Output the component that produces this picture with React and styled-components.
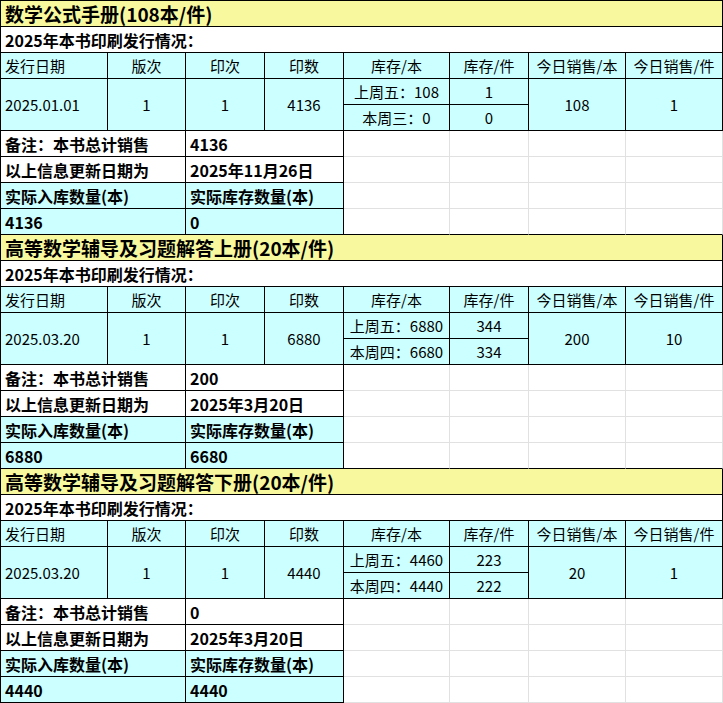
import styled, { createGlobalStyle } from 'styled-components';

const colors = {
  LINE: '#000000',
  GRID: '#e1e1e1',
  CYAN: '#ccffff',
  YELLOW: '#f8f99f',
  WHITE: '#ffffff',
};

const GlobalStyle = createGlobalStyle`
  html, body {
    margin: 0;
    padding: 0;
    background: #ffffff;
  }
  body {
    font-family: "Noto Sans CJK SC", "Noto Sans", sans-serif;
    color: #000;
  }
`;

const Sheet = styled.div`
  display: grid;
  grid-template-columns: 107px 78px 79px 79px 106px 79px 97px 97px;
  grid-auto-rows: 26px;
  width: fit-content;
  border-left: 1px solid ${colors.LINE};
  border-top: 1px solid ${colors.LINE};
`;

const Cell = styled.div`
  grid-column: span ${(p) => p.$cols || 1};
  grid-row: span ${(p) => p.$rows || 1};
  box-sizing: border-box;
  display: flex;
  align-items: center;
  justify-content: ${(p) => (p.$left ? 'flex-start' : 'center')};
  padding: ${(p) => (p.$left ? '0 0 0 4px' : '0')};
  background: ${(p) => p.$bg || colors.CYAN};
  border-right: 1px solid ${colors.LINE};
  border-bottom: 1px solid ${colors.LINE};
  font-size: 15px;
  line-height: 1;
  white-space: nowrap;
  overflow: hidden;
`;

const TitleCell = styled(Cell)`
  background: ${colors.YELLOW};
  padding-left: 4px;
  font-size: 19px;
  font-weight: 700;
`;

const SubCell = styled(Cell)`
  background: ${colors.WHITE};
  padding-left: 4px;
  font-size: 16px;
  font-weight: 700;
`;

const NoteCell = styled(Cell)`
  padding-left: 4px;
  font-size: 16px;
  font-weight: 700;
`;

const EmptyCell = styled.div`
  background: ${colors.WHITE};
  border-right: 1px solid ${colors.GRID};
  border-bottom: 1px solid ${(p) => (p.$dark ? colors.LINE : colors.GRID)};
`;

const headers = ['库存/本', '库存/件', '今日销售/本', '今日销售/件'];

const books = [
  {
    title: '数学公式手册(108本/件)',
    date: '2025.01.01',
    count: '4136',
    stock: [
      ['上周五：108', '1'],
      ['本周三：0', '0'],
    ],
    soldBooks: '108',
    soldPacks: '1',
    total: '4136',
    updated: '2025年11月26日',
    inbound: '4136',
    actual: '0',
  },
  {
    title: '高等数学辅导及习题解答上册(20本/件)',
    date: '2025.03.20',
    count: '6880',
    stock: [
      ['上周五：6880', '344'],
      ['本周四：6680', '334'],
    ],
    soldBooks: '200',
    soldPacks: '10',
    total: '200',
    updated: '2025年3月20日',
    inbound: '6880',
    actual: '6680',
  },
  {
    title: '高等数学辅导及习题解答下册(20本/件)',
    date: '2025.03.20',
    count: '4440',
    stock: [
      ['上周五：4460', '223'],
      ['本周四：4440', '222'],
    ],
    soldBooks: '20',
    soldPacks: '1',
    total: '0',
    updated: '2025年3月20日',
    inbound: '4440',
    actual: '4440',
  },
];

const Blanks = ({ dark }) => (
  <>
    {[0, 1, 2, 3].map((i) => (
      <EmptyCell key={i} $dark={dark} />
    ))}
  </>
);

const NoteRow = ({ note, dark }) => (
  <>
    <NoteCell $cols={2} $left $bg={note.bg}>
      {note.label}
    </NoteCell>
    <NoteCell $cols={2} $left $bg={note.bg}>
      {note.value}
    </NoteCell>
    <Blanks dark={dark} />
  </>
);

const BookBlock = ({ book, last }) => {
  const notes = [
    { label: '备注：本书总计销售', value: book.total, bg: colors.WHITE },
    { label: '以上信息更新日期为', value: book.updated, bg: colors.WHITE },
    { label: '实际入库数量(本)', value: '实际库存数量(本)', bg: colors.CYAN },
    { label: book.inbound, value: book.actual, bg: colors.CYAN },
  ];

  return (
    <>
      <TitleCell $cols={8} $left>
        {book.title}
      </TitleCell>
      <SubCell $cols={8} $left>
        2025年本书印刷发行情况：
      </SubCell>

      <Cell $left>发行日期</Cell>
      <Cell>版次</Cell>
      <Cell>印次</Cell>
      <Cell>印数</Cell>
      {headers.map((h) => (
        <Cell key={h}>{h}</Cell>
      ))}

      <Cell $rows={2} $left>
        {book.date}
      </Cell>
      <Cell $rows={2}>1</Cell>
      <Cell $rows={2}>1</Cell>
      <Cell $rows={2}>{book.count}</Cell>
      <Cell>{book.stock[0][0]}</Cell>
      <Cell>{book.stock[0][1]}</Cell>
      <Cell $rows={2}>{book.soldBooks}</Cell>
      <Cell $rows={2}>{book.soldPacks}</Cell>
      <Cell>{book.stock[1][0]}</Cell>
      <Cell>{book.stock[1][1]}</Cell>

      {notes.map((n, i) => (
        <NoteRow key={i} note={n} dark={!last && i === notes.length - 1} />
      ))}
    </>
  );
};

export default function App() {
  return (
    <>
      <GlobalStyle />
      <Sheet>
        {books.map((b, i) => (
          <BookBlock key={b.title} book={b} last={i === books.length - 1} />
        ))}
      </Sheet>
    </>
  );
}
